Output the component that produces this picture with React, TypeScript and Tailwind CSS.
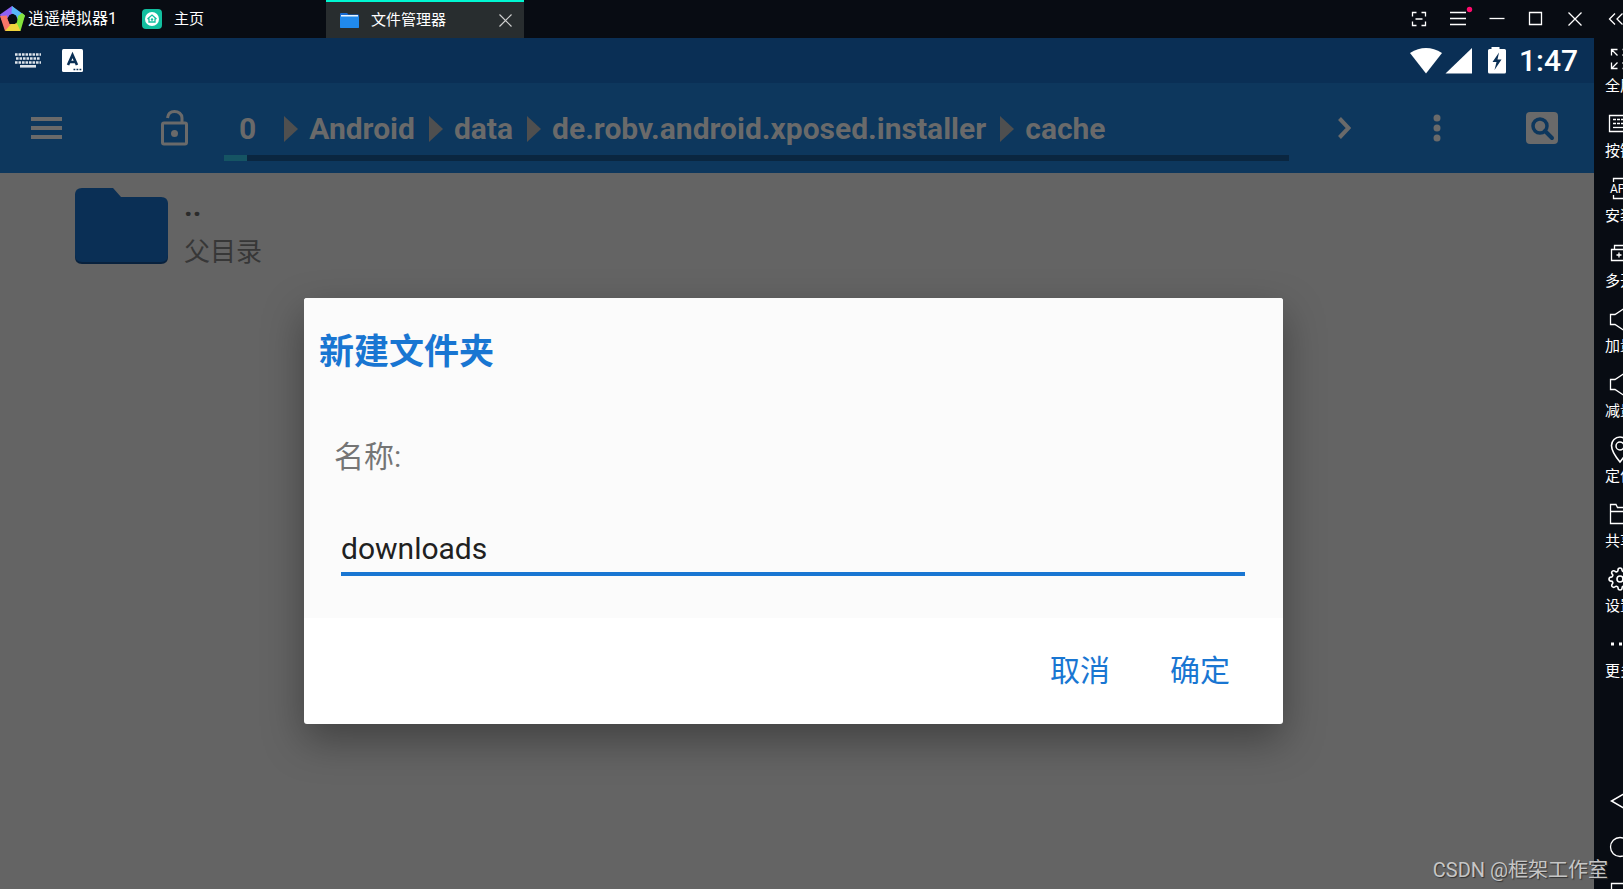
import type { ReactNode } from "react";
import { FiSettings } from "react-icons/fi";

const crumbs = ["Android", "data", "de.robv.android.xposed.installer", "cache"];

function Line({ children }: { children: ReactNode }) {
  return (
    <svg
      width="24"
      height="24"
      viewBox="0 0 24 24"
      fill="none"
      stroke="currentColor"
      strokeWidth="1.3"
      className="shrink-0 overflow-visible"
    >
      {children}
    </svg>
  );
}

const tools = [
  {
    label: "全屏",
    icon: (
      <Line>
        <path d="M9.5 2.5h-6v6M3.500 2.5l6 6M3.5 15.5v6h6M3.5 21.5l6-6M14.5 2.5h6v6M20.5 2.5l-6 6M14.5 21.5h6v-6M20.5 21.5l-6-6" />
      </Line>
    )
  },
  {
    label: "按键",
    icon: (
      <Line>
        <path d="M1.5 3.5h21v16h-21z" />
        <path d="M5 7.5h14M5 11.5h14" strokeDasharray="3 1" />
        <path d="M5 15.5h14" />
      </Line>
    )
  },
  {
    label: "安装",
    icon: (
      <Line>
        <path d="M5.5 5V1.5h14V5M5.5 18v3.5h14V18" />
        <text x="2" y="16" fontSize="12" fill="currentColor" stroke="none" className="font-['Roboto',sans-serif]">
          APP
        </text>
      </Line>
    )
  },
  {
    label: "多开",
    icon: (
      <Line>
        <path d="M3.5 7.5h15v11h-15zM6.5 7.5v-4h15v11h-3M11 10.5v5M8.5 13h5" />
      </Line>
    )
  },
  {
    label: "加量",
    icon: (
      <Line>
        <path d="M2.5 7.500h4.500l9-6v22l-9-6H2.500zM20 8v8" />
      </Line>
    )
  },
  {
    label: "减量",
    icon: (
      <Line>
        <path d="M2.5 7.500h4.500l9-6v22l-9-6H2.500zM20 10v4" />
      </Line>
    )
  },
  {
    label: "定位",
    icon: (
      <Line>
        <path d="M12 25C7 19 3.5 14 3.5 8.5a8.500 8.500 0 0 1 17 0C20.5 14 17 19 12 25z" strokeWidth="1.6" />
        <circle cx="12" cy="9" r="4" strokeWidth="1.5" />
      </Line>
    )
  },
  {
    label: "共享",
    icon: (
      <Line>
        <path d="M2.5 21.5v-19H8l1.500 3h12v16zM2.5 9.5h19" />
      </Line>
    )
  },
  { label: "设置", icon: <FiSettings className="h-6 w-6 shrink-0" strokeWidth={1.6} /> },
  {
    label: "更多",
    icon: (
      <Line>
        <path d="M3 12h3M11 12h3M19 12h3" strokeWidth="3" />
      </Line>
    )
  }
];

const windowControls = [
  {
    label: "截图",
    icon: <path d="M.5 4.500v-4h4M9.5.5h4v4M13.5 9.5v4h-4M4.5 13.5h-4v-4M3.5 7h7" />
  },
  {
    label: "菜单",
    icon: (
      <>
        <path d="M-1 .5h16M-1 6.5h16M-1 12.5h16" />
        <circle cx="18.5" cy="-2.5" r="2.7" fill="#ff0a6c" stroke="none" />
      </>
    )
  },
  { label: "最小化", icon: <path d="M-.5 6.5h15" /> },
  { label: "最大化", icon: <path d="M.5.5h12v12H.5z" /> },
  { label: "关闭", icon: <path d="M.5.5l13 13M13.5.5l-13 13" /> }
];

function TitleBar() {
  return (
    <header className="flex h-[38px] shrink-0 overflow-hidden bg-[#080c13] text-[15px] leading-5 text-white">
      <div className="flex w-[326px] items-center">
        <svg width="25" height="26" viewBox="0 0 25 26" className="shrink-0">
          <path d="M12 0l-12 8.500 1.500 5.500 6-1.500 2-3.500 8.500-3z" fill="#8e62f5" />
          <path d="M12 0l13 9.500-4 9-4-6.500-1-2.500-4.500-2.500z" fill="#58b8f8" />
          <path d="M25 9.500L20.500 25l-7-3 3.500-6 1-6 4-3z" fill="#83e33c" />
          <path d="M20.500 25H5l2.500-8.500 2.500.5 7 .5z" fill="#f0d43c" />
          <path d="M5 25L0 10l7-.5 1 4.500 3 4z" fill="#f87668" />
          <path d="M12 8l5 4-2 6H9.500l-2-6z" fill="#080c13" />
        </svg>
        <span className="ml-[3px] text-base leading-5 whitespace-nowrap">逍遥模拟器1</span>
        <button className="ml-[25px] flex items-center gap-3 whitespace-nowrap">
          <svg width="20" height="20" viewBox="0 0 20 20">
            <rect width="20" height="20" rx="4" fill="#12bf9f" />
            <circle cx="10" cy="10" r="7" fill="#fff" />
            <path d="M5.5 10L10 6l4.500 4M7 9.500v3.500h6V9.500" fill="none" stroke="#12bf9f" strokeWidth="1.3" />
            <circle cx="10" cy="10.5" r="1.2" fill="#12bf9f" />
          </svg>
          主页
        </button>
      </div>
      <div className="flex w-[198px] items-center border-t-2 border-[#00f7d2] bg-[#282d2f] pr-3 pl-[14px]">
        <svg width="19" height="15" viewBox="0 0 19 15">
          <path d="M0 1q0-1 1-1h6l1.500 1.500H18q1 0 1 1V14q0 1-1 1H1q-1 0-1-1z" fill="#1668cf" />
          <path d="M1 2h17v3H1z" fill="#e8f3ff" />
          <path d="M0 3.500h19V14q0 1-1 1H1q-1 0-1-1z" fill="#2089ec" />
        </svg>
        <span className="ml-3 flex-1 whitespace-nowrap">文件管理器</span>
        <button aria-label="关闭标签">
          <svg width="13" height="13" viewBox="0 0 13 13" stroke="#d0d0d0" strokeWidth="1.2">
            <path d="M.5.5l12 12M12.5.5l-12 12" />
          </svg>
        </button>
      </div>
      <div className="ml-auto flex">
        {windowControls.map((control) => (
          <button key={control.label} aria-label={control.label} className="grid w-[39px] place-items-center">
            <svg
              width="14"
              height="14"
              viewBox="0 0 14 14"
              fill="none"
              stroke="currentColor"
              strokeWidth="1.3"
              className="overflow-visible"
            >
              {control.icon}
            </svg>
          </button>
        ))}
        <button aria-label="收起" className="flex w-[29px] items-center overflow-hidden pl-[14px]">
          <svg width="15" height="12" viewBox="0 0 15 12" fill="none" stroke="currentColor" strokeWidth="1.3">
            <path d="M7 .5L1.500 6 7 11.500M14.500.5L9 6l5.500 5.500" />
          </svg>
        </button>
      </div>
    </header>
  );
}

function StatusBar() {
  return (
    <div className="flex h-[45px] items-center bg-[#0a2f55] pr-4 pl-[15px] text-white">
      <svg width="26" height="15" viewBox="0 0 26 15" stroke="#dde3ea" fill="none">
        <path d="M0 1.500h26M0 9.500h26" strokeWidth="2.6" strokeDasharray="2.6 .9" />
        <path d="M1 5.500h24" strokeWidth="2.6" strokeDasharray="2.6 .9" />
        <path d="M5 13.300h16" strokeWidth="2.6" />
      </svg>
      <svg width="21" height="23" viewBox="0 0 21 23" className="ml-[21px]">
        <rect width="21" height="23" rx="1.5" fill="#fff" />
        <path d="M6 16l4.500-10L15 16M7.500 13h6" fill="none" stroke="#0a2f55" strokeWidth="2.6" />
        <path d="M11.500 20.500h8" stroke="#0a2f55" strokeWidth="1.5" strokeDasharray="1.8 1.2" />
      </svg>
      <div className="ml-auto flex items-center">
        <svg width="96" height="28" viewBox="0 0 96 28" fill="#fff">
          <path d="M0 6Q16-4 32 6L16 26.500z" />
          <path d="M62 1v25.500H35.500z" />
          <path
            fillRule="evenodd"
            d="M81.500 0h8v2h5q1.500 0 1.500 1.500V25q0 1.500-1.500 1.500h-15q-1.500 0-1.500-1.500V3.500Q78 2 79.500 2h2zM89 5.500L82.500 15h4L84.500 23l7-10.500h-4z"
          />
        </svg>
        <span className="ml-[13px] font-['Roboto',sans-serif] text-3xl leading-9 font-medium">1:47</span>
      </div>
    </div>
  );
}

function AppBar() {
  return (
    <div className="flex h-[90px] items-center bg-[#0d375d] pr-9 pl-[31px] text-[#6a6a6a]">
      <button aria-label="菜单">
        <svg width="31" height="22" viewBox="0 0 31 22" fill="currentColor">
          <path d="M0 0h31v4H0zM0 9h31v4H0zM0 18h31v4H0z" />
        </svg>
      </button>
      <button aria-label="锁定" className="ml-[99px]">
        <svg width="27" height="36" viewBox="0 0 27 36" fill="none" stroke="currentColor" strokeWidth="3">
          <rect x="1.5" y="13" width="24" height="21" rx="1.5" />
          <path d="M6.500 8C7 3.500 9.500 1.500 13.500 1.500S21 4 21 8v5" />
          <circle cx="13.5" cy="23.5" r="3.5" fill="currentColor" stroke="none" />
        </svg>
      </button>
      <nav className="ml-9 flex h-full min-w-0 flex-1 flex-col pt-5">
        <ol className="flex min-h-0 flex-1 items-center overflow-hidden pl-[15px] font-['Roboto',sans-serif] text-3xl leading-9 font-bold whitespace-nowrap">
          <li className="pr-[14px]">
            <a href="#0">0</a>
          </li>
          {crumbs.map((crumb) => (
            <li key={crumb} className="flex items-center">
              <svg width="14" height="26" viewBox="0 0 14 26" fill="#4f4f4f" className="mr-[11px] ml-[14px]">
                <path d="M0 0l14 13L0 26z" />
              </svg>
              <a href={"#" + crumb}>{crumb}</a>
            </li>
          ))}
        </ol>
        <div className="mb-3 h-[6px] bg-[#0a2640]">
          <div className="h-full w-[23px] bg-[#155463]" />
        </div>
      </nav>
      <button aria-label="下一个" className="ml-[39px] grid w-8 place-items-center">
        <svg width="13" height="22" viewBox="0 0 13 22" fill="none" stroke="currentColor" strokeWidth="4">
          <path d="M1.500 1.500L10.500 11l-9 9.500" />
        </svg>
      </button>
      <button aria-label="更多" className="ml-[61px] grid w-8 place-items-center">
        <svg width="8" height="28" viewBox="0 0 8 28" fill="currentColor">
          <circle cx="4" cy="4" r="3.5" />
          <circle cx="4" cy="14" r="3.5" />
          <circle cx="4" cy="24" r="3.5" />
        </svg>
      </button>
      <button aria-label="搜索" className="ml-[73px]">
        <svg width="32" height="32" viewBox="0 0 32 32" fill="none" stroke="#0d375d">
          <rect width="32" height="32" rx="4" fill="#6a6a6a" stroke="none" />
          <circle cx="14" cy="14" r="7" strokeWidth="3.5" />
          <path d="M19 19l7 7" strokeWidth="4" strokeLinecap="round" />
        </svg>
      </button>
    </div>
  );
}

function NewFolderDialog() {
  return (
    <div className="absolute inset-0 pt-[260px] pr-[311px] pl-[304px]">
      <form
        role="dialog"
        aria-labelledby="dialog-title"
        className="overflow-hidden rounded-[3px] bg-white shadow-[0_16px_40px_rgba(0,0,0,0.35)]"
      >
        <div className="bg-[#fbfbfb] px-[15px] pt-[30px] pb-[42px]">
          <h2 id="dialog-title" className="text-[35px] leading-[50px] font-bold text-[#1976d2]">
            新建文件夹
          </h2>
          <div className="px-[15px] pt-[59px]">
            <label htmlFor="folder-name" className="block text-3xl leading-10 text-[#757575]">
              名称:
            </label>
          </div>
          <div className="pt-12 pr-[23px] pl-[22px]">
            <input
              id="folder-name"
              type="text"
              defaultValue="downloads"
              className="block h-[51px] w-full border-b-4 border-[#1976d2] bg-transparent text-3xl text-[#212121] outline-none"
            />
          </div>
        </div>
        <div className="flex h-[106px] items-center justify-end gap-[60px] pr-[53px] text-3xl leading-10 text-[#1976d2]">
          <button type="button">取消</button>
          <button type="submit">确定</button>
        </div>
      </form>
    </div>
  );
}

function ToolRail() {
  return (
    <aside className="w-[29px] shrink-0 overflow-hidden bg-[#080c13] text-white">
      <div className="flex h-full w-[52px] flex-col">
        {tools.map((tool) => (
          <button
            key={tool.label}
            className="flex h-[65px] shrink-0 flex-col items-center gap-[5px] pt-[9px] text-[15px] leading-5 whitespace-nowrap"
          >
            {tool.icon}
            {tool.label}
          </button>
        ))}
        <div className="mt-auto flex h-[111px] shrink-0 flex-col">
          <button aria-label="返回" className="grid h-[46px] shrink-0 place-items-center">
            <Line>
              <path d="M20 2.500v19L3.500 12z" strokeWidth="1.5" />
            </Line>
          </button>
          <button aria-label="主屏幕" className="grid h-[46px] shrink-0 place-items-center">
            <Line>
              <circle cx="12" cy="12" r="9.5" />
            </Line>
          </button>
          <button aria-label="最近任务" className="grid h-[46px] shrink-0 place-items-center">
            <Line>
              <path d="M3.500 2.500h18v18h-18z" />
            </Line>
          </button>
        </div>
      </div>
    </aside>
  );
}

export default function App() {
  return (
    <div className="relative flex h-screen flex-col overflow-hidden bg-[#080c13] font-['Roboto','Noto_Sans_CJK_SC',sans-serif]">
      <TitleBar />
      <div className="flex min-h-0 flex-1">
        <main className="relative min-w-0 flex-1 overflow-hidden bg-[#646464]">
          <StatusBar />
          <AppBar />
          <div className="flex pt-[15px] pl-[75px]">
            <svg width="93" height="77" viewBox="0 0 93 77">
              <path d="M0 9q0-7 7-7h31l8 9h40q7 0 7 7v51q0 7-7 7H7q-7 0-7-7z" fill="#08213d" />
              <path d="M0 7q0-7 7-7h31l8 9h40q7 0 7 7v51q0 7-7 7H7q-7 0-7-7z" fill="#0a2f55" />
            </svg>
            <div className="ml-4 text-[26px]">
              <p className="text-3xl leading-9 font-bold text-[#2b2b2b]">..</p>
              <p className="pt-2 leading-10 text-[#373737]">父目录</p>
            </div>
          </div>
          <NewFolderDialog />
        </main>
        <ToolRail />
      </div>
      <p className="absolute right-[15px] bottom-[3px] text-xl leading-8 text-[#c6c6c6] [text-shadow:1px_1px_1px_#333]">
        CSDN @框架工作室
      </p>
    </div>
  );
}
